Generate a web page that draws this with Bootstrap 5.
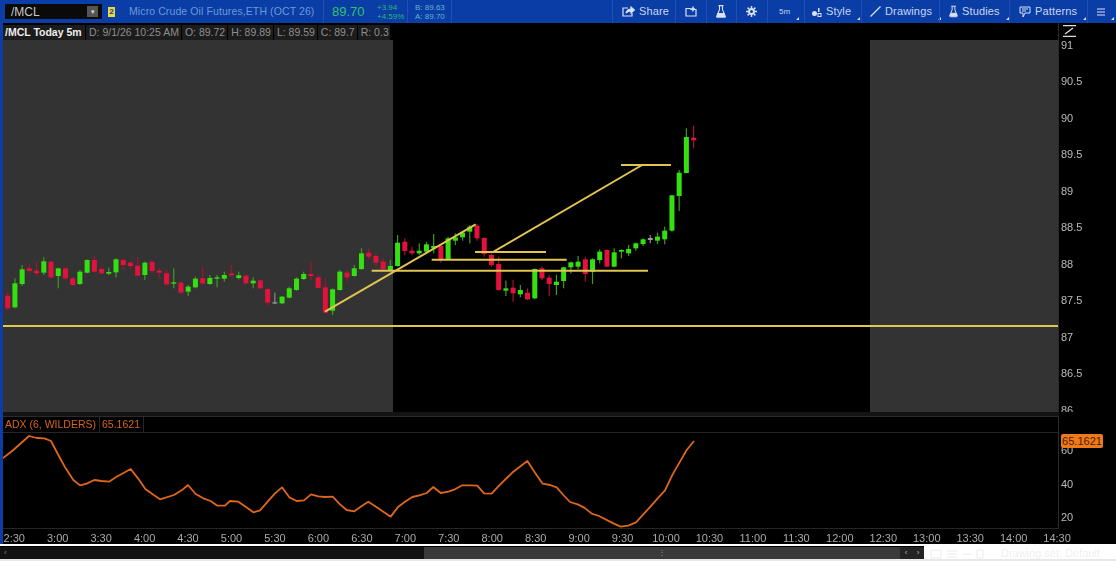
<!DOCTYPE html>
<html lang="en">
<head>
    <meta charset="UTF-8">
    <title>/MCL Today 5m</title>
    <link href="https://cdn.jsdelivr.net/npm/bootstrap@5.3.3/dist/css/bootstrap.min.css" rel="stylesheet">
    <style>
        html, body { width: 1116px; height: 561px; overflow: hidden; }
        body { background: #000; font-family: "Liberation Sans", Arial, sans-serif; font-size: 11px; color: #aaa; }
        .page { width: 1116px; height: 561px; filter: blur(.5px); }

        /* top bar */
        .topbar { height: 23px; background: #0a3da6; color: #c8d6f0; }
        .symbol-box { width: 97px; height: 15px; margin-left: 5px; background: #0a0a0a; color: #c9c9c9; font-size: 12px; padding-left: 6px; }
        .symbol-btn { width: 11px; height: 11px; margin-right: 4px; background: #555; color: #ddd; font-size: 7px; line-height: 11px; text-align: center; }
        .link-badge { width: 7px; height: 10px; margin-left: 6px; background: #e8d83a; color: #0a3da6; font-size: 8px; font-weight: 700; line-height: 10px; text-align: center; }
        .instrument { margin-left: 14px; width: 194px; font-size: 10.5px; letter-spacing: .1px; color: #6b9ad8; white-space: nowrap; }
        .last-price { width: 50px; padding-left: 8px; font-size: 13px; color: #2fc26c; border-left: 1px solid #1d4fb4; line-height: 23px; }
        .tiny { font-size: 8px; line-height: 9px; }
        .change { width: 34px; padding-left: 4px; color: #2fb86e; }
        .quote { width: 45px; padding-left: 7px; color: #62b4cf; border-left: 1px solid #1d4fb4; border-right: 1px solid #1d4fb4; height: 23px; justify-content: center; }
        .tool { height: 23px; padding-left: 9px; border-left: 1px solid #1d4fb4; font-size: 11px; letter-spacing: .15px; gap: 4px; flex: none; }
        .tool svg { flex: none; }
        .caret-mark { width: 0; height: 0; margin: 13px 0 0 2px; border-left: 3px solid transparent; border-bottom: 3px solid #d8e2f5; }
        .t-share { width: 63px; }
        .t-icon { width: 31px; }
        .t-flask { width: 30px; }
        .t-period { width: 37px; padding-left: 11px; }
        .t-style { width: 57px; padding-left: 7px; }
        .t-drawings { width: 78px; padding-left: 8px; }
        .t-studies { width: 70px; }
        .t-patterns { width: 78px; }
        .t-menu { width: 29px; }

        /* chart panes */
        .workspace { border-left: 3px solid #0a3da6; }
        .price-row { height: 389px; overflow: hidden; }
        .pane { width: 1056px; border-right: 1px solid #2a2a2a; }
        .axis { width: 57px; padding-left: 2px; color: #bbb; font-size: 11px; }
        .price-axis { padding-top: 3.75px; }
        .price-axis .tick { height: 36.5px; line-height: 36.5px; }
        .study-axis { padding-top: 17.25px; }
        .study-axis .tick { height: 33.5px; line-height: 33.5px; }
        .scale-icon { position: absolute; left: 4px; top: 2px; }
        .info-row { height: 17px; background: #000; font-size: 10.5px; }
        .info-row span { height: 15px; line-height: 15px; margin-top: 2px; padding: 0 2px 0 3px; background: #1c1c1c; color: #8f8f8f; border-right: 1px solid #000; white-space: nowrap; }
        .info-row .title { width: 83px; color: #eee; font-weight: 700; padding-left: 2px; }
        .info-row .last { width: 33px; }
        .plot { height: 372px; }
        .session-off { background: #333; }
        .session-on { background: #000; }
        .plot svg, .study-plot svg { position: absolute; left: 0; top: 0; }
        .pane-gap { width: 1056px; height: 5px; background: #141414; border-bottom: 1px solid #2b2b2b; }
        .study-row { height: 112px; }
        .study-head { height: 16px; border-bottom: 1px solid #262626; color: #d5641c; font-size: 10.5px; }
        .study-head span { padding: 0 3px 0 2px; line-height: 15px; border-right: 1px solid #262626; }
        .study-plot { height: 96px; border-bottom: 1px solid #262626; }
        .value-tag { position: absolute; left: 2px; top: 17px; width: 42px; height: 14px; line-height: 14px; background: #f07a18; color: #4a2000; border-radius: 2px; font-size: 11px; text-align: center; }
        .time-axis { height: 15px; margin-left: -10.5px; color: #aaa; font-size: 11px; line-height: 18px; overflow: hidden; }
        .time-axis div { flex: 0 0 43.46px; text-align: center; }

        /* bottom */
        .white-rule { height: 2px; background: #fff; }
        .scroll-row { height: 12px; margin-top: 1px; }
        .track { width: 424px; background: #121212; color: #888; font-size: 8px; line-height: 12px; }
        .thumb { width: 476px; background: #3a3a3a; color: #999; font-size: 8px; line-height: 12px; text-align: center; }
        .nudge { width: 24px; background: #242424; color: #bbb; font-size: 8px; line-height: 12px; }
        .status { width: 192px; height: 15px; margin-top: -1px; background: #fff; color: #efefef; font-size: 11px; line-height: 15px; padding: 0 16px 0 6px; white-space: nowrap; }
        .foot { height: 2px; background: #e8e8e8; }
    </style>
</head>
<body>
<div class="page d-flex flex-column">

    <!-- top bar -->
    <div class="topbar d-flex align-items-center">
        <div class="symbol-box d-flex align-items-center justify-content-between"><span>/MCL</span><span class="symbol-btn">&#9662;</span></div>
        <div class="link-badge">2</div>
        <div class="instrument">Micro Crude Oil Futures,ETH (OCT 26)</div>
        <div class="last-price">89.70</div>
        <div class="change tiny d-flex flex-column"><span>+3.94</span><span>+4.59%</span></div>
        <div class="quote tiny d-flex flex-column"><span>B: 89.63</span><span>A: 89.70</span></div>

        <div class="tool d-flex align-items-center ms-auto t-share">
            <svg width="13" height="11" viewBox="0 0 13 11" fill="none" stroke="#d8e2f5" stroke-width="1.2"><path d="M6 2H1v8h9V7"/><path d="M4 7c1-3 3-4 5-4V1l3.500 3L9 7V5C7 5 5 6 4 7z" fill="#d8e2f5"/></svg>
            <span>Share</span>
        </div>
        <div class="tool d-flex align-items-center t-icon">
            <svg width="12" height="11" viewBox="0 0 12 11" fill="none" stroke="#d8e2f5" stroke-width="1.2"><path d="M1 2.500h4l1 1h5V10H1z"/><path d="M8 .5v5M6 3h4" stroke-width="1.400"/></svg>
        </div>
        <div class="tool d-flex align-items-center t-flask">
            <svg width="10" height="13" viewBox="0 0 10 13" fill="none" stroke="#d8e2f5" stroke-width="1.1"><path d="M2.500.6h5M3.500.6v4L.8 11c-.3.700 0 1.300.8 1.300h6.800c.8 0 1.100-.6.8-1.300L6.500 4.600v-4"/><path d="M2.300 8.500h5.400l1 3H1.300z" fill="#d8e2f5"/></svg>
        </div>
        <div class="tool d-flex align-items-center t-icon">
            <svg width="11" height="11" viewBox="0 0 11 11" fill="none" stroke="#d8e2f5"><circle cx="5.500" cy="5.500" r="2.500" stroke-width="2"/><path d="M5.500 0v2M5.500 9v2M0 5.500h2M9 5.500h2M1.600 1.600 3 3M8 8l1.400 1.400M1.600 9.400 3 8M8 3l1.400-1.400" stroke-width="1.500"/></svg>
        </div>
        <div class="tool d-flex align-items-center t-period">
            <span class="tiny">5m</span><i class="caret-mark"></i>
        </div>
        <div class="tool d-flex align-items-center t-style">
            <svg width="10" height="10" viewBox="0 0 10 10" fill="#d8e2f5"><circle cx="2.500" cy="6.500" r="2.500"/><rect x="6" y="1" width="1.500" height="4"/><rect x="6" y="6.500" width="3" height="3" fill="none" stroke="#d8e2f5"/></svg>
            <span>Style</span><i class="caret-mark"></i>
        </div>
        <div class="tool d-flex align-items-center t-drawings">
            <svg width="11" height="11" viewBox="0 0 11 11" fill="none" stroke="#d8e2f5" stroke-width="1.300"><path d="M.5 10.500 10.500.5"/></svg>
            <span>Drawings</span><i class="caret-mark"></i>
        </div>
        <div class="tool d-flex align-items-center t-studies">
            <svg width="9" height="13" viewBox="0 0 10 13" fill="none" stroke="#d8e2f5" stroke-width="1.100"><path d="M2.500.6h5M3.500.6v4L.8 11c-.3.700 0 1.300.8 1.300h6.800c.8 0 1.100-.6.8-1.300L6.500 4.600v-4"/><path d="M2.300 8.500h5.400l1 3H1.300z" fill="#d8e2f5"/></svg>
            <span>Studies</span><i class="caret-mark"></i>
        </div>
        <div class="tool d-flex align-items-center t-patterns">
            <svg width="12" height="12" viewBox="0 0 12 12" fill="none" stroke="#d8e2f5"><path d="M1 1h10v6H6L4 11V7H1z"/><path d="M3 3h6M3 5h4"/></svg>
            <span>Patterns</span><i class="caret-mark"></i>
        </div>
        <div class="tool d-flex align-items-center t-menu">
            <svg width="8" height="8" viewBox="0 0 8 8" stroke="#d8e2f5"><path d="M0 1h8M0 4h8M0 7h8"/></svg><i class="caret-mark"></i>
        </div>
    </div>

    <div class="workspace">
        <!-- price pane -->
        <div class="price-row d-flex">
            <div class="pane">
                <div class="info-row d-flex">
                    <span class="title">/MCL Today 5m</span>
                    <span>D: 9/1/26 10:25 AM</span>
                    <span>O: 89.72</span>
                    <span>H: 89.89</span>
                    <span>L: 89.59</span>
                    <span>C: 89.7</span>
                    <span class="last">R: 0.3</span>
                </div>
                <div class="plot d-flex position-relative">
                    <div class="session-off" style="width:390px"></div>
                    <div class="session-on" style="width:477px"></div>
                    <div class="session-off flex-grow-1"></div>
                    <svg id="priceChart" width="1055" height="372" viewBox="3 40 1055 372"></svg>
                </div>
            </div>
            <div class="axis price-axis position-relative">
                <svg class="scale-icon" width="13" height="12" viewBox="0 0 13 12" fill="none" stroke="#ddd"><path d="M0 .5h13M0 11.500h13" stroke-width="1.300"/><path d="M2 9 10 3" stroke-width="1.300"/></svg>
                <div class="tick">91</div><div class="tick">90.5</div><div class="tick">90</div><div class="tick">89.5</div><div class="tick">89</div><div class="tick">88.5</div><div class="tick">88</div><div class="tick">87.5</div><div class="tick">87</div><div class="tick">86.5</div><div class="tick">86</div>
            </div>
        </div>
        <div class="pane-gap"></div>

        <!-- ADX pane -->
        <div class="study-row d-flex">
            <div class="pane">
                <div class="study-head d-flex">
                    <span>ADX (6, WILDERS)</span>
                    <span>65.1621</span>
                </div>
                <div class="study-plot position-relative">
                    <svg id="adxChart" width="1055" height="96" viewBox="3 433 1055 96"></svg>
                </div>
            </div>
            <div class="axis study-axis position-relative">
                <div class="value-tag">65.1621</div>
                <div class="tick">60</div><div class="tick">40</div><div class="tick">20</div>
            </div>
        </div>

        <!-- time axis -->
        <div class="time-axis d-flex" id="timeAxis"></div>
    </div>

    <div class="white-rule"></div>

    <!-- scroller -->
    <div class="scroll-row d-flex">
        <div class="track ps-1">&#8249;</div>
        <div class="thumb">&#8942;</div>
        <div class="nudge d-flex justify-content-around"><span>&#8249;</span><span>&#8250;</span></div>
        <div class="status d-flex align-items-center justify-content-between">
            <svg width="60" height="10" viewBox="0 0 60 10" fill="none" stroke="#ececec"><path d="M1 1h10v8H1zM17 2h10M17 5h10M17 8h10M33 5h8M47 1h6v8h-6z"/></svg>
            <span>Drawing set: Default</span>
        </div>
    </div>
    <div class="foot mt-auto"></div>
</div>

<script>
    var NS = 'http://www.w3.org/2000/svg';

    function add(svg, tag, attrs) {
        var el = document.createElementNS(NS, tag);
        for (var k in attrs) el.setAttribute(k, attrs[k]);
        svg.appendChild(el);
    }

    // [colour, wick top, body top, body bottom, wick bottom], read off the chart
    var G = 'g', R = 'r', N = 'n';
    var left = [
        [R,215,227,265,272],[G,175,190,262,265],[G,135,148,192,198],[R,130,145,153,160],[R,125,152,160,170],
        [G,112,124,158,165],[R,122,125,172,175],[G,143,145,168,205],[R,143,145,175,180],[R,170,175,195,198],
        [G,150,155,192,195],[G,118,120,158,160],[R,108,120,155,157],[R,140,147,160,162],[G,143,156,161,165],
        [G,115,118,157,172],[R,115,120,135,150],[R,125,128,138,148],[R,110,137,167,170],[G,125,128,165,180],
        [R,122,125,153,158],[R,145,152,158,175],[R,150,160,193,198],[G,145,187,191,205],[R,185,188,218,222],
        [G,195,200,215,228],[G,170,176,202,205],[R,140,175,190,195],[G,165,174,192,195],[G,165,172,176,202],
        [G,155,165,176,185],[R,135,160,166,170],[G,155,166,174,178],[R,163,167,190,192],[G,172,182,190,205],
        [R,178,181,205,208],[R,205,207,248,258],[N,218,247,250,252],[G,228,230,250,252],[G,200,205,233,235],
        [G,172,176,210,212],[G,155,162,177,180],[R,125,162,168,180],[R,165,172,204,205],[R,175,202,278,280],
        [G,205,208,272,285],[G,150,155,210,212],[R,150,158,172,185],[G,135,145,168,170],[G,85,100,147,150]
    ];
    var middle = [
        [R,115,128,140,148],[R,130,138,158,170],[R,145,155,177,180],[G,150,168,180,182],[G,75,98,168,170],
        [R,85,95,123,135],[R,110,122,130,135],[G,100,122,130,135],[G,95,103,125,130],[G,72,108,115,130],
        [R,105,108,148,158],[G,80,85,148,150],[G,70,82,92,105],[G,65,68,82,92],[G,45,50,65,100],
        [R,42,47,85,92],[R,82,84,132,140],[R,130,135,165,170],[R,140,162,240,242],[G,212,235,242,258],
        [R,210,233,250,275],[G,225,240,253,262],[R,235,248,268,270],[G,175,177,265,268],[R,170,175,205,210],
        [R,195,203,222,258],[G,195,215,225,255],[G,170,172,213,235],[G,155,157,172,190],[G,138,155,170,178],
        [R,140,148,192,215],[G,145,148,185,222],[G,118,125,150,160],[R,118,120,170,172],[G,115,127,170,172],
        [G,118,120,125,145],[G,105,117,130,138],[G,98,100,115,122],[G,85,88,102,108],[N,75,84,90,100],
        [G,68,80,92,102]
    ];
    var right = [
        [G,335,347,373,388],[G,240,241,347,350],[G,165,173,243,288],[G,40,66,174,175],[R,32,68,76,100]
    ];

    var candles = []
        .concat(left.map(function (c) { return scale(c, 220); }))
        .concat(middle.map(function (c) { return scale(c, 210); }))
        .concat(right.map(function (c) { return scale(c, 115); }));

    function scale(c, top) {
        return [c[0], top + c[1] / 3, top + c[2] / 3, top + c[3] / 3, top + c[4] / 3];
    }

    var body = { g: '#35e010', r: '#e2123c', n: '#9a9a9a' };
    var wick = { g: '#3f9a20', r: '#a81030', n: '#8a8a8a' };
    var price = document.getElementById('priceChart');

    candles.forEach(function (c, i) {
        var x = 7.7 + 7.22 * i;
        add(price, 'rect', { x: x - .6, y: c[1], width: 1.2, height: c[4] - c[1], fill: wick[c[0]] });
        add(price, 'rect', { x: x - 2.5, y: c[2], width: 5, height: Math.max(c[3] - c[2], 1.2), fill: body[c[0]] });
    });

    // hand drawn lines on the chart
    [
        [3, 326, 1058, 326, 2],
        [325, 311.7, 475.7, 224.3, 2],
        [371.7, 270.7, 648, 270.7, 2],
        [431.7, 259.7, 566.7, 259.7, 2],
        [475, 252, 546, 252, 2],
        [493, 252, 643, 164.5, 2],
        [621, 165, 671, 165, 2]
    ].forEach(function (l) {
        add(price, 'line', { x1: l[0], y1: l[1], x2: l[2], y2: l[3], stroke: '#e2c550', 'stroke-width': l[4] });
    });

    // ADX line
    var adxLeft = [[8,160],[40,135],[87,93],[110,99],[133,100],[153,108],[175,150],[197,190],[220,225],[240,241],[260,236],[283,225],[305,228],[327,230],[350,215],[392,192],[414,220],[436,252],[458,268],[480,283],[522,270],[545,256],[564,240],[587,267],[610,280],[632,288],[652,302],[675,302],[690,288],[715,290],[737,305],[760,322],[780,316],[803,290],[825,265],[846,247],[868,277],[890,288],[912,286],[933,268],[955,274],[975,276],[998,275],[1020,298],[1040,315],[1063,319],[1085,303],[1105,290],[1128,305],[1150,320],[1172,335],[1195,305]];
    var adxRight = [[15,290],[37,276],[58,271],[80,264],[100,246],[122,264],[145,260],[165,253],[187,241],[210,241],[232,242],[252,265],[275,266],[295,244],[317,222],[338,202],[382,168],[405,203],[428,236],[450,240],[470,247],[490,270],[510,291],[533,298],[553,308],[575,326],[597,333],[640,355],[662,365],[685,362],[708,352],[730,328],[752,304],[773,280],[795,256],[818,208],[840,170],[860,135],[882,108]];
    var adxPoints = adxLeft.map(function (p) { return (p[0] / 3) + ',' + (405 + p[1] / 3); })
        .concat(adxRight.map(function (p) { return (400 + p[0] / 3) + ',' + (405 + p[1] / 3); }));
    add(document.getElementById('adxChart'), 'polyline', {
        points: adxPoints.join(' '), fill: 'none', stroke: '#e0661c', 'stroke-width': 1.8, 'stroke-linejoin': 'round'
    });

    // time labels every half hour
    var timeAxis = document.getElementById('timeAxis');
    var minutes = 150;
    for (var i = 0; i < 25; i++, minutes += 30) {
        var h = Math.floor(minutes / 60);
        var label = document.createElement('div');
        label.textContent = h + ':' + (minutes % 60 === 0 ? '00' : '30');
        timeAxis.appendChild(label);
    }
</script>
<script src="https://cdn.jsdelivr.net/npm/bootstrap@5.3.3/dist/js/bootstrap.bundle.min.js"></script>
</body>
</html>
